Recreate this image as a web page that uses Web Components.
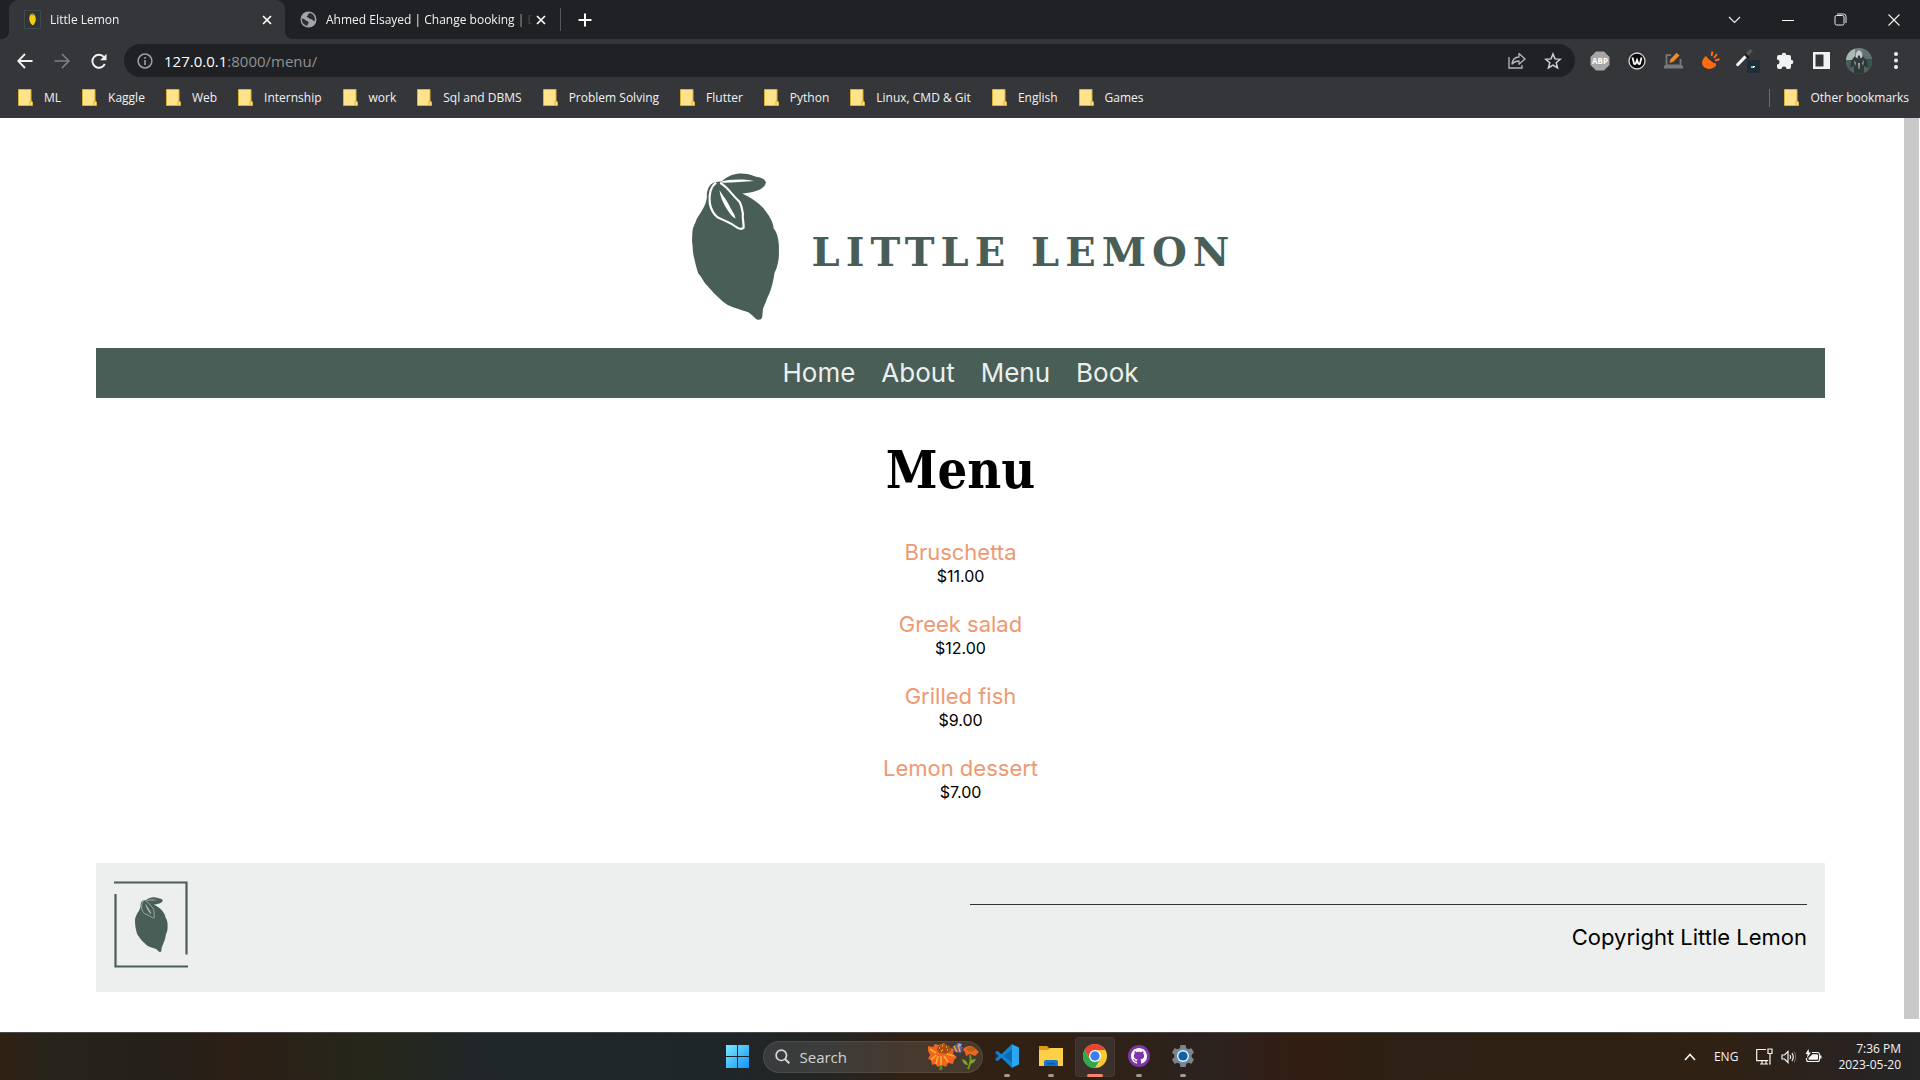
<!DOCTYPE html>
<html lang="en">
<head>
<meta charset="utf-8">
<title>Little Lemon</title>
<style>
  html, body { margin: 0; height: 100%; }
  body { background: #fff; overflow: hidden; }
</style>
</head>
<body>
<desktop-screen></desktop-screen>
<script>
const define = (name, html, setup) => {
  const template = document.createElement('template');
  template.innerHTML = html;
  customElements.define(name, class extends HTMLElement {
    constructor() {
      super();
      this.attachShadow({ mode: 'open' }).append(template.content.cloneNode(true));
    }
    connectedCallback() { if (setup) setup(this, this.shadowRoot); }
  });
};

const RESET = `
  :host, *, ::before, ::after { box-sizing: border-box; }
  button { border: 0; padding: 0; margin: 0; background: none; color: inherit; font: inherit; display: grid; place-items: center; }
  a { color: inherit; text-decoration: none; }
  svg { display: block; }
`;

/* ---------- browser tabs ---------- */
define('browser-tab', `<style>${RESET}
  :host { position: relative; display: flex; align-items: center; height: 39px; padding: 0 10px 0 15px; width: 274px; font-size: 12px; line-height: 16px; }
  :host([active]) { width: 276px; background: #35363a; border-radius: 9px 9px 0 0; }
  :host([active])::before, :host([active])::after { content: ""; position: absolute; bottom: 0; width: 8px; height: 8px; }
  :host([active])::before { right: 100%; background: radial-gradient(circle at 0 0, transparent 8px, #35363a 8px); }
  :host([active])::after { left: 100%; background: radial-gradient(circle at 100% 0, transparent 8px, #35363a 8px); }
  .title { flex: 1; min-width: 0; padding-left: 9px; overflow: hidden; white-space: nowrap; -webkit-mask-image: linear-gradient(90deg, #000 calc(100% - 20px), transparent); }
  button { width: 16px; height: 16px; }
</style>
<slot name="icon"></slot><span class="title"><slot></slot></span>
<button aria-label="Close tab"><svg width="10" height="10" viewBox="0 0 10 10"><path d="M1 1l8 8M9 1L1 9" stroke="#fff" stroke-width="1.7"/></svg></button>`);

define('tab-strip', `<style>${RESET}
  :host { display: flex; height: 39px; align-items: center; background: #202124; color: #f1f3f4; }
  .tabs { display: flex; align-items: center; flex: 1; padding-left: 9px; }
  .tabs i { width: 1px; height: 23px; background: #55575b; margin-left: 1px; }
  .new { width: 30px; height: 30px; margin-left: 9px; }
  .win { display: flex; }
  .win button { width: 53px; height: 36px; }
</style>
<div class="tabs">
  <browser-tab active><svg slot="icon" width="17" height="19" viewBox="0 0 17 19"><rect x=".5" y=".5" width="16" height="18" fill="#303337" stroke="#3c4a4b"/><path d="M8 3.5C6 4 5 7 5.300 9.500c.3 3 2 5 3.700 6 1-1.200 3-3.500 2.800-7C11.500 5.500 10 4 8 3.500z" fill="#f4ce14"/><path d="M6 5l3-1.500 2 1-2.500 1z" fill="#a88a28"/></svg>Little Lemon</browser-tab>
  <browser-tab><svg slot="icon" width="17" height="17" viewBox="0 0 17 17"><circle cx="8.500" cy="8.500" r="8" fill="#a2a6ab"/><path d="M1.800 7.500c2 .2 3 1 4.200 2 .8.800 2.500.5 2.600 2 .1 1.200-1.300 1.400-1.100 3.300C4 14.300 1.500 11.500 1.800 7.500zM9.500 2c-1.500.8-1.200 2.200-2.200 2.700-.9.400-.6 1.600.5 1.700 1.400.1 1.300 1.400 2.700 1.500 1.500 0 2 .9 2.800 1.900.6.700 1.400.2 1.700-1C15 5 12.500 2.200 9.500 2z" fill="#2b2d31"/></svg>Ahmed Elsayed | Change booking | D</browser-tab>
  <i></i>
  <button class="new" aria-label="New tab"><svg width="14" height="14" viewBox="0 0 14 14"><path d="M7 .5v13M.5 7h13" stroke="#fff" stroke-width="2"/></svg></button>
</div>
<div class="win">
  <button aria-label="Search tabs"><svg width="13" height="8" viewBox="0 0 13 8"><path d="M1 1l5.500 5.500L12 1" fill="none" stroke="#e8eaed" stroke-width="1.200"/></svg></button>
  <button aria-label="Minimize"><svg width="12" height="12" viewBox="0 0 12 12"><path d="M0 6.500h12" stroke="#fff"/></svg></button>
  <button aria-label="Restore"><svg width="13" height="13" viewBox="0 0 13 13"><rect x="1" y="2.500" width="9" height="9.500" rx="1.500" fill="none" stroke="#e8eaed"/><path d="M3 1h6.500A2.500 2.500 0 0 1 12 3.500V10" fill="none" stroke="#e8eaed"/></svg></button>
  <button aria-label="Close"><svg width="12" height="12" viewBox="0 0 12 12"><path d="M.5.5l11 11M11.500.5l-11 11" stroke="#f1f3f4" stroke-width="1.100"/></svg></button>
</div>`);

/* ---------- address bar row ---------- */
define('address-row', `<style>${RESET}
  :host { display: flex; align-items: center; height: 43px; padding: 0 6px; background: #35363a; color: #fff; }
  .nav, .ext { display: flex; align-items: center; }
  .nav button, .ext button { width: 37px; height: 33px; }
  .bar { flex: 1; display: flex; align-items: center; height: 33px; margin: 0 6px 0 7px; padding: 0 4px 0 13px; border-radius: 17px; background: #202124; font-size: 15px; line-height: 20px; }
  .url { flex: 1; padding-left: 11px; white-space: nowrap; }
  .url span { color: #8f9296; }
  .bar button { width: 36px; height: 32px; }
  .bar button:first-child { width: 16px; }
</style>
<div class="nav">
  <button aria-label="Back"><svg width="16" height="16" viewBox="0 0 16 16"><path d="M15.500 8H1.500M8 1L1.200 8 8 15" fill="none" stroke="#f1f3f4" stroke-width="1.800"/></svg></button>
  <button aria-label="Forward"><svg width="16" height="16" viewBox="0 0 16 16"><path d="M.5 8h14M8 1l6.800 7L8 15" fill="none" stroke="#7e8083" stroke-width="1.700"/></svg></button>
  <button aria-label="Reload"><svg width="16" height="16" viewBox="0 0 16 16"><path d="M13.800 11A6.500 6.500 0 1 1 13 4.200" fill="none" stroke="#f1f3f4" stroke-width="1.900"/><path d="M15.500.8v6.400H9.100z" fill="#f1f3f4"/></svg></button>
</div>
<div class="bar">
  <button aria-label="Site information"><svg width="16" height="16" viewBox="0 0 16 16"><circle cx="8" cy="8" r="6.900" fill="none" stroke="#9aa0a6" stroke-width="1.500"/><path d="M8 7v5M8 4v1.700" stroke="#9aa0a6" stroke-width="1.600"/></svg></button>
  <div class="url" role="textbox" aria-label="Address">127.0.0.1<span>:8000/menu/</span></div>
  <button aria-label="Share"><svg width="18" height="17" viewBox="0 0 18 17"><path d="M1 5v11h13v-3" fill="none" stroke="#b4b7bb" stroke-width="1.300"/><path d="M4 12c.5-4.500 3-6.800 7-7V1.500L17 7l-6 5.200V9C8 9 6 9.800 4 12z" fill="none" stroke="#b4b7bb" stroke-width="1.300" stroke-linejoin="round"/></svg></button>
  <button aria-label="Bookmark this page"><svg width="18" height="18" viewBox="0 0 18 18"><path d="M9 2l2 4.900 5.200.4-4 3.400 1.300 5.200L9 13.100l-4.500 2.800 1.300-5.200-4-3.400L7 6.900z" fill="none" stroke="#cfd1d4" stroke-width="1.500"/></svg></button>
</div>
<div class="ext">
  <button aria-label="AdBlock Plus"><svg width="20" height="20" viewBox="0 0 20 20"><path d="M6 .5h8L19.500 6v8L14 19.500H6L.5 14V6z" fill="#a6a6a6"/><text x="10" y="13" text-anchor="middle" font-size="8" font-weight="700" font-family="Open Sans, sans-serif" fill="#fff">ABP</text></svg></button>
  <button aria-label="Wordmark extension"><svg width="18" height="18" viewBox="0 0 18 18"><circle cx="9" cy="9" r="8" fill="#0b0b0b" stroke="#d6d6d6" stroke-width="1.300"/><path d="M4.500 5.500L6 11.500q.8 1.300 1.700 0L9 8l1.300 3.500q.9 1.300 1.700 0l1.500-6" fill="none" stroke="#fff" stroke-width="1.800"/></svg></button>
  <button aria-label="Page editor"><svg width="19" height="17" viewBox="0 0 19 17"><path d="M7 3.200H2.500v10.300h14V7" fill="none" stroke="#77797c" stroke-width="1.800"/><path d="M0 15h19" stroke="#77797c" stroke-width="3"/><path d="M5.500 11l1-3.800L12.500.8l3 2.800-6.200 6.200z" fill="#f08c1e"/></svg></button>
  <button aria-label="Highlighter"><svg width="18" height="19" viewBox="0 0 18 19"><path d="M3 6c-3 2.500-4 6.500-1.500 9.500s7.500 3 10.500 1c2-1.300 2.500-2.500 2-3.200C12 13 5.500 10 3 6z" fill="#ff6a13"/><path d="M3.500 5.500c1 4 6 8 10.500 8" fill="none" stroke="#ff6a13" stroke-width="2.200"/><path d="M4 6l9.500 7.500L8 13z" fill="#ff6a13"/><path d="M9.500 5l1-4.500M12 7l3-4M13 9.500l4.500-1.200" stroke="#ff6a13" stroke-width="2"/></svg></button>
  <button aria-label="Color picker"><svg width="24" height="25" viewBox="0 0 24 25"><rect x="11" y="12" width="13" height="13" fill="#202d38"/><path d="M1.800 16.500L9.500 8.500" stroke="#f5f5f5" stroke-width="3.200" stroke-linecap="round"/><path d="M9.500 8.500l6-6.500" stroke="#55585c" stroke-width="3.500"/><path d="M9 6l4 4" stroke="#17181a" stroke-width="2"/><rect x="15" y="18" width="2" height="2" fill="#5ad0c0"/><rect x="17" y="18" width="2" height="2" fill="#fff"/><rect x="18" y="19" width="1" height="1" fill="#d22"/></svg></button>
  <button aria-label="Extensions"><svg width="18" height="18" viewBox="0 0 18 18"><path d="M1 5a2 2 0 0 1 2-2h2.700a2.300 2.300 0 1 1 4.600 0H13a2 2 0 0 1 2 2v2.700a2.300 2.300 0 1 1 0 4.600V15a2 2 0 0 1-2 2h-2.500a2.500 2.500 0 0 0-5 0H3a2 2 0 0 1-2-2v-2.500a2.500 2.500 0 0 0 0-5z" fill="#f1f3f4"/></svg></button>
  <button aria-label="Side panel"><svg width="17" height="17" viewBox="0 0 17 17"><path fill-rule="evenodd" d="M0 0h17v17H0zM2.500 2.500v12h8v-12z" fill="#f1f3f4"/></svg></button>
  <button aria-label="Profile"><svg width="26" height="26" viewBox="0 0 26 26"><defs><clipPath id="c"><circle cx="13" cy="13" r="13"/></clipPath></defs><g clip-path="url(#c)"><path d="M0 0h26v26H0z" fill="#718084"/><path d="M0 0h9v12H0z" fill="#a9b7b5"/><path d="M17 2h9v10h-9z" fill="#5d7072"/><path d="M0 12h7l-2 14H0z" fill="#44605a"/><path d="M20 11h6v15h-6z" fill="#38544f"/><path d="M13 2l-4 6-4 5-1 13h18l-1-13-4-5z" fill="#30383a"/><path d="M13 2c-2.500 1.500-3.500 4-3.500 7l2 1.500.5-3h2l.5 3 2-1.500c0-3-1-5.500-3.500-7z" fill="#c9cdca"/><path d="M8 12l2 3-1 3zM18 12l-2 3 1 3zM12 15h2l-.5 6h-1z" fill="#a3a9a7"/><path d="M4 20l4-2v8H4zM22 20l-4-2v8h4z" fill="#59615f"/></g></svg></button>
  <button aria-label="Browser menu"><svg width="4" height="17" viewBox="0 0 4 17"><circle cx="2" cy="2" r="2" fill="#f1f3f4"/><circle cx="2" cy="8.500" r="2" fill="#f1f3f4"/><circle cx="2" cy="15" r="2" fill="#f1f3f4"/></svg></button>
</div>`);

/* ---------- bookmarks ---------- */
define('bookmark-folder', `<style>${RESET}
  :host { display: block; }
  button { display: flex; align-items: center; gap: 11px; font-size: 12px; line-height: 16px; white-space: nowrap; color: #f1f3f4; }
</style>
<button><svg width="15" height="17" viewBox="0 0 15 17"><path d="M.5.500h12.500v11.500l1.500 1v3.500H.5z" fill="#ffe38b" stroke="#d9b136"/><path d="M12 16v-4h1.500" fill="none" stroke="#d9b136"/></svg><slot></slot></button>`);

define('bookmarks-bar', `<style>${RESET}
  :host { display: flex; align-items: center; height: 36px; padding: 0 11px 5px 18px; background: #35363a; }
  .list { display: flex; gap: 21px; flex: 1; }
  .rest { display: flex; align-items: center; gap: 14px; }
  .rest i { width: 1px; height: 18px; background: #6b6d71; }
</style>
<div class="list"></div>
<div class="rest"><i></i><bookmark-folder>Other bookmarks</bookmark-folder></div>`, (el, root) => {
  const list = root.querySelector('.list');
  if (list.children.length) return;
  for (const name of ['ML', 'Kaggle', 'Web', 'Internship', 'work', 'Sql and DBMS', 'Problem Solving', 'Flutter', 'Python', 'Linux, CMD & Git', 'English', 'Games']) {
    const b = document.createElement('bookmark-folder');
    b.textContent = name;
    list.append(b);
  }
});

/* ---------- Little Lemon site ---------- */
define('lemon-mark', `<style>${RESET}
  :host { display: block; width: 88px; height: 147px; --vein: #fff; }
  svg { width: 100%; height: 100%; }
  .line { fill: none; stroke: var(--vein); stroke-width: 6; stroke-linejoin: round; }
  .vein { fill: var(--vein); }
</style>
<svg viewBox="57 68 237 443" preserveAspectRatio="none" role="img" aria-label="Lemon">
  <path fill="#495e57" d="M122 95C105 98 96 115 97 142C95 165 81 187 70 206C66 220 58 232 58 246L57 273C60 292 58 307 63 325C66 342 70 357 74 371C84 382 89 399 97 406C112 425 132 450 152 465C170 475 190 480 207 487C220 495 226 507 234 510C248 511 246 504 248 478C254 460 257 455 261 441C269 425 275 400 279 370C290 345 292 320 291 300C292 275 288 250 277 235C275 212 262 192 250 175C234 155 212 140 192 130C218 126 252 121 256 97C254 81 236 82 222 76C195 65 163 66 137 93Z"/>
  <path class="line" d="M122 97C108 108 102 130 105 160C108 178 116 192 125 201C140 210 160 216 172 228C180 235 190 240 196 233C197 220 192 205 194 190C190 172 191 160 181 150C165 135 155 112 133 98"/>
  <path class="vein" d="M131 120C142 140 150 148 157 165C165 185 173 192 174 205C163 200 155 183 147 170C140 155 133 140 131 120ZM133 94C160 86 195 86 224 92C195 94 165 98 133 97Z"/>
</svg>`);

define('site-header', `<style>${RESET}
  :host { display: flex; justify-content: center; align-items: center; gap: 32px; padding: 55px 0 28px; }
  .word { padding-top: 10px; font: bold 40px/48px "DejaVu Serif", serif; letter-spacing: 6px; margin-right: -6px; color: #495e57; white-space: nowrap; }
</style>
<lemon-mark></lemon-mark><span class="word">LITTLE LEMON</span>`);

define('site-nav', `<style>${RESET}
  nav { display: flex; justify-content: center; align-items: center; gap: 26px; height: 50px; background: #495e57; color: #edefee; font-size: 26px; line-height: 32px; }
  :host { display: block; }
</style>
<nav><a href="#home">Home</a><a href="#about">About</a><a href="#menu">Menu</a><a href="#book">Book</a></nav>`);

define('menu-item', `<style>${RESET}
  :host { display: block; text-align: center; }
  a { display: block; font-size: 22px; line-height: 28px; color: #ee9972; }
  span { display: block; font-size: 16px; line-height: 20px; color: #000; }
</style>
<a href="#dish"><slot></slot></a><span><slot name="price"></slot></span>`);

define('site-footer', `<style>${RESET}
  :host { display: grid; grid-template-columns: 1fr 1fr; gap: 18px; height: 129px; padding: 18px; background: #edefee; }
  .frame { display: grid; grid-template: 87px / 74px; align-content: start; }
  .frame > * { grid-area: 1 / 1; }
  lemon-mark { width: 33px; height: 55px; align-self: center; justify-self: center; --vein: #b4bdb9; }
  .copy { border-top: 1px solid #333; margin-top: 23px; padding-top: 17px; text-align: right; font-size: 22px; line-height: 30px; color: #000; align-self: start; }
</style>
<div class="frame">
  <svg width="74" height="87" viewBox="0 0 74 87"><path d="M0 1.500h72.500V73.500M1.500 13v72.500H74" fill="none" stroke="#495e57" stroke-width="2.200"/></svg>
  <lemon-mark></lemon-mark>
</div>
<div class="copy">Copyright Little Lemon</div>`);

define('lemon-site', `<style>${RESET}
  :host { display: flex; background: #fff; font-family: Inter, sans-serif; overflow: hidden; }
  .body { flex: 1; padding: 0 79px 0 96px; }
  h1 { margin: 42px 0 38px; text-align: center; font: bold 52px/60px "DejaVu Serif Condensed", "DejaVu Serif", serif; color: #000; }
  .items { display: flex; flex-direction: column; gap: 24px; margin-bottom: 61px; }
  .scroll { width: 16px; padding-bottom: 13px; display: flex; }
  .scroll::before { content: ""; flex: 1; margin-right: 1px; background: #c9c9c9; }
</style>
<div class="body">
  <site-header></site-header>
  <site-nav></site-nav>
  <h1>Menu</h1>
  <div class="items">
    <menu-item>Bruschetta<span slot="price">$11.00</span></menu-item>
    <menu-item>Greek salad<span slot="price">$12.00</span></menu-item>
    <menu-item>Grilled fish<span slot="price">$9.00</span></menu-item>
    <menu-item>Lemon dessert<span slot="price">$7.00</span></menu-item>
  </div>
  <site-footer></site-footer>
</div>
<div class="scroll"></div>`);

/* ---------- taskbar ---------- */
define('task-icon', `<style>${RESET}
  :host { display: block; width: 44px; }
  button { width: 40px; height: 40px; margin: 0 auto; border-radius: 4px; grid-template-rows: 1fr 3px; padding-top: 2px; }
  :host([active]) button { background: #3b302b; box-shadow: inset 0 0 0 1px #443934; }
  i { width: 6px; height: 3px; border-radius: 2px; background: #a09a94; }
  :host([active]) i { width: 16px; background: #f9826c; }
  :host([plain]) i { visibility: hidden; }
</style>
<button><slot></slot><i></i></button>`, (el, root) => root.querySelector('button').setAttribute('aria-label', el.title));

define('task-bar', `<style>${RESET}
  :host { display: grid; grid-template-columns: 1fr auto 1fr; align-items: center; height: 48px; border-top: 1px solid #4b4a48; color: #f4f4f4;
    background: linear-gradient(90deg, #302014 0, #26241b 3%, #242119 8%, #2c1f16 12%, #25271a 20%, #20262a 25%, #1f2629 38%, #242523 43%, #302114 47%, #302114 57%, #2b221f 63%, #331d12 68%, #2c2114 72%, #2f2114 90%, #282321 97%, #252628 100%); }
  .mid { grid-column: 2; display: flex; align-items: center; }
  .search { display: flex; align-items: center; gap: 10px; width: 220px; height: 32px; margin: 0 2px 0 3px; padding: 0 3px 0 11px; border-radius: 16px; background: #ffffff1c; border: 1px solid #ffffff14; }
  .search input { flex: 1; min-width: 0; border: 0; padding: 0; background: none; outline: 0; color: #d6d4d2; font: 15px/20px "Open Sans", sans-serif; }
  .search input::placeholder { color: #d6d4d2; opacity: 1; }
  .tray { display: flex; justify-content: flex-end; align-items: center; padding-right: 19px; font-size: 12px; line-height: 16px; }
  .tray .lang { margin: 0 18px; }
  .sys { display: flex; align-items: center; gap: 8px; margin-right: 16px; }
  .clock { text-align: right; }
</style>
<div class="mid">
  <task-icon plain title="Start"><svg width="23" height="23" viewBox="0 0 23 23"><defs><linearGradient id="w" x2="1" y2="1"><stop stop-color="#7be8ff"/><stop offset="1" stop-color="#1296f5"/></linearGradient></defs><path d="M0 0h11v11H0zM12 0h11v11H12zM0 12h11v11H0zM12 12h11v11H12z" fill="url(#w)"/></svg></task-icon>
  <label class="search">
    <svg width="15" height="15" viewBox="0 0 15 15"><circle cx="6.300" cy="6.300" r="5.200" fill="none" stroke="#d9d7d5" stroke-width="1.700"/><path d="M10 10l4.300 4.300" stroke="#d9d7d5" stroke-width="2"/></svg>
    <input type="text" placeholder="Search" aria-label="Search">
    <svg width="51" height="27" viewBox="0 0 51 27"><path d="M12 19q1 4-1 8h3q1-4 0-8z" fill="#5d8a1d"/><path d="M0 3l5 1 2-3 4 1 5-2 3 4 7 2-1 5 4 3-3 3-1 4-5-1-2 4-4-2-4 2-3-3-3 1-1-5-3-1 2-4-2-4z" fill="#f0641f"/><path d="M8 10L2 6m6 6l-5 5m7-4l-2 8m5-8v9m3-9l4 6m-1-8l7 2" stroke="#ffad2e" stroke-width="1.600"/><ellipse cx="16" cy="6" rx="7" ry="4.500" fill="#a34c12"/><path d="M11 5h1m2-2h1m3 1h1m-5 3h1m4 0h1m-7 1h1" stroke="#f6b63c" stroke-width="1.500"/><path d="M24 4l4-3 7 3-2 6-6-1z" fill="#5d5c9c"/><path d="M26 3l3 6m1-7l2 7" stroke="#f2a13a" stroke-width="1.500"/><path d="M29 0l5 1-2 3z" fill="#8ab4f0"/><path d="M42 12q2 6-2 14" fill="none" stroke="#6d9a20" stroke-width="2"/><path d="M40 22q-5 0-6-6 5 1 6 6zm1-1q5 0 7-5-6 0-7 5z" fill="#7da32a"/><path d="M36 5l4-2 4 0 5 4 2 2-4 4-5-2-4 2-1-4-2-2z" fill="#f0641f"/><ellipse cx="43" cy="6" rx="4" ry="2.500" fill="#b3621b"/></svg>
  </label>
  <task-icon title="Visual Studio Code"><svg width="24" height="24" viewBox="0 0 24 24"><path d="M17 .3L6.500 10.200 2.300 7 .5 8v8l1.800 1L6.500 13.800 17 23.700z" fill="#0b6bb0"/><path d="M.5 8L2.300 7l14.700 11.500v5.200zM17 .3v5.200L2.300 17 .5 16z" fill="#1383cc"/><path d="M3 12L.5 9.500v5z" fill="#2a211a"/><path d="M17 .3l7 3.200v17l-7 3.200z" fill="#2ba4f1"/></svg></task-icon>
  <task-icon title="File Explorer"><svg width="24" height="22" viewBox="0 0 24 22"><path d="M0 1h8l3 3v4H0z" fill="#e09a14"/><path d="M0 5h9l2-2h13v18H0z" fill="#ffcf48"/><path d="M5 21v-4q0-2 2-2h10q2 0 2 2v4z" fill="#1676c8"/><path d="M8 18h8v1.500H8z" fill="#0a559c"/></svg></task-icon>
  <task-icon active title="Google Chrome"><svg width="24" height="24" viewBox="0 0 24 24"><circle cx="12" cy="12" r="12" fill="#fcc934"/><path d="M12 0A12 12 0 0 0 1.600 6L6.800 15 12 6h10.400A12 12 0 0 0 12 0z" fill="#ea4335"/><path d="M1.600 6A12 12 0 0 0 12 24l5.200-9H6.800z" fill="#2da94f"/><circle cx="12" cy="12" r="6" fill="#fff"/><circle cx="12" cy="12" r="4.700" fill="#3b7ded"/></svg></task-icon>
  <task-icon title="GitHub Desktop"><svg width="22" height="22" viewBox="0 0 22 22"><circle cx="11" cy="11" r="11" fill="#7f35a8"/><path transform="translate(3 3)" fill="#fff" d="M8 0C3.580 0 0 3.580 0 8c0 3.540 2.290 6.530 5.470 7.590.4.070.550-.170.550-.380 0-.190-.010-.820-.010-1.490-2.010.370-2.530-.490-2.690-.940-.090-.230-.480-.940-.820-1.130-.280-.150-.680-.520-.010-.530.630-.010 1.080.580 1.230.820.720 1.210 1.870.870 2.330.660.070-.520.280-.870.510-1.070-1.780-.2-3.640-.890-3.640-3.950 0-.870.310-1.590.820-2.150-.080-.2-.360-1.020.080-2.120 0 0 .670-.210 2.200.820.640-.180 1.320-.270 2-.270.680 0 1.360.090 2 .270 1.530-1.040 2.200-.820 2.200-.820.440 1.100.160 1.920.080 2.120.510.560.820 1.270.820 2.150 0 3.070-1.870 3.750-3.650 3.950.290.250.540.730.540 1.480 0 1.070-.010 1.930-.010 2.200 0 .210.150.460.550.380A8.010 8.010 0 0 0 16 8c0-4.420-3.580-8-8-8z"/></svg></task-icon>
  <task-icon title="Settings"><svg width="24" height="24" viewBox="0 0 24 24"><path d="M9.500 1h5l.8 3.200 2 1.100 3.200-1 2.500 4.300-2.400 2.300v2.200l2.400 2.300-2.500 4.300-3.200-1-2 1.100-.8 3.200h-5l-.8-3.200-2-1.100-3.200 1L1 15.400l2.400-2.300v-2.200L1 8.600l2.500-4.300 3.200 1 2-1.100z" fill="#7b8790"/><circle cx="12" cy="12" r="6" fill="#e8f3fa"/><circle cx="12" cy="12" r="4.600" fill="#0d62b0"/></svg></task-icon>
</div>
<div class="tray">
  <svg width="12" height="8" viewBox="0 0 12 8"><path d="M1 7l5-5.500L11 7" fill="none" stroke="#f4f4f4" stroke-width="1.600"/></svg>
  <span class="lang">ENG</span>
  <div class="sys">
    <svg width="17" height="17" viewBox="0 0 17 17"><path d="M10 1.500H.7v11.200h11.500M4 16h8M6 13v3M10 13v3M12 1h4v4.500h-4zM14 6v10h-1" fill="none" stroke="#f4f4f4" stroke-width="1.200"/></svg>
    <svg width="16" height="14" viewBox="0 0 16 14"><path d="M1 5v4h2.500L7 12.500v-11L3.500 5z" fill="none" stroke="#f4f4f4" stroke-width="1.200"/><path d="M9 5q1.300 2 0 4M11 3q2.500 4 0 8" fill="none" stroke="#f4f4f4" stroke-width="1.200"/><path d="M13 1.500q3.500 5.500 0 11" fill="none" stroke="#77716c"/></svg>
    <svg width="17" height="15" viewBox="0 0 17 15"><path d="M7 3.500h5.500q2 0 2 2v5q0 2-2 2h-9q-2 0-2-2V9" fill="none" stroke="#f4f4f4" stroke-width="1.100"/><path d="M7.500 5.300h4.500q1 0 1 1v3.500q0 1-1 1H4.500q-1 0-1-1V9z" fill="#f4f4f4"/><path d="M15 6.500h1.500v3H15z" fill="#f4f4f4"/><path d="M3.500 0L.5 5h2L2 9l4-5.500H4z" fill="#f4f4f4"/></svg>
  </div>
  <div class="clock">7:36 PM<br>2023-05-20</div>
</div>`);

define('desktop-screen', `<style>${RESET}
  :host { display: flex; flex-direction: column; height: 100vh; font-family: "Open Sans", "Noto Sans", sans-serif; }
  lemon-site { flex: 1; min-height: 0; }
</style>
<tab-strip></tab-strip>
<address-row></address-row>
<bookmarks-bar></bookmarks-bar>
<lemon-site></lemon-site>
<task-bar></task-bar>`);
</script>
</body>
</html>
